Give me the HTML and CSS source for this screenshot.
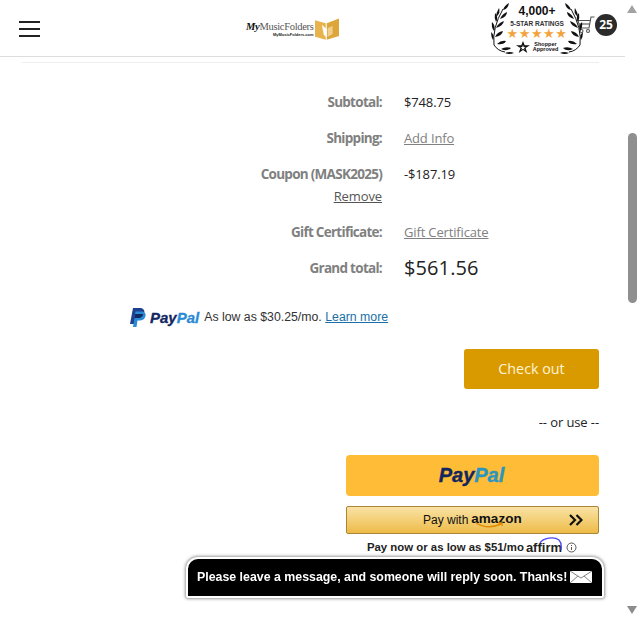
FILE: index.html
```html
<!DOCTYPE html>
<html lang="en">
<head>
  <meta charset="UTF-8" />
  <meta name="viewport" content="width=device-width, initial-scale=1" />
  <title>Cart | MyMusicFolders</title>
  <link rel="stylesheet" href="styles.css">
</head>
<body>

  <header class="site-header">
    <div class="menu-btn"><span></span><span></span><span></span></div>

    <div class="logo">
      <div class="logo-text">
        <p class="logo-name"><em>My</em>MusicFolders</p>
        <p class="logo-sub">MyMusicFolders.com</p>
      </div>
      <svg class="logo-mark" width="25" height="22" viewBox="0 0 25 22">
        <path d="M0 2l11 3v17L0 19z" fill="#e6b34c"/>
        <path d="M12 22V5l13-5v18z" fill="#dca63a"/>
        <path d="M7 7l5 4v9l-3-3z" fill="#fff"/>
        <path d="M13 10l5-2v8l-5 3z" fill="#f1d08c"/>
      </svg>
    </div>

    <div class="rating">
      <svg class="laurel" width="92" height="52" viewBox="0 0 92 52">
        <g id="branch" fill="#111">
          <path d="M14 50q-7-1-11-7" fill="none" stroke="#111" stroke-width="1"/>
          <path d="M3 43Q1 26 12 7" fill="none" stroke="#111" stroke-width="1"/>
          <path d="M12 8q1-4 6-7-1 6-6 7z"/>
          <path d="M8 14q0-4 3-9 2 5-3 9z" transform="translate(-3 1)"/>
          <path d="M9 17q2-5 7-7 0 5-7 7z"/>
          <path d="M5 20q-2-4-1-9 4 4 1 9z"/>
          <path d="M5 26q2-5 8-7-1 5-8 7z"/>
          <path d="M3 29q-3-4-2-9 4 4 2 9z"/>
          <path d="M4 35q2-5 8-6-1 5-8 6z"/>
          <path d="M2 38q-2-3-2-8 4 3 2 8z"/>
          <path d="M6 42q4-4 9-3-2 4-9 3z"/>
          <path d="M10 47q5-3 10-1-4 4-10 1z"/>
          <path d="M14 51q5-2 9 0-5 2-9 0z"/>
        </g>
        <use href="#branch" transform="matrix(-1 0 0 1 92 0)"/>
      </svg>
      <p class="rating-count">4,000+</p>
      <p class="rating-label">5-STAR RATINGS</p>
      <p class="rating-stars">★★★★★</p>
      <div class="rating-foot">
        <svg width="14" height="12" viewBox="0 0 14 12">
          <path d="M7 0l1.700 4.300H14L9.600 7l1.700 5L7 9l-4.300 3 1.700-5L0 4.300h5.300z" fill="#111"/>
          <path d="M7 4l.7 2h2L8 7l.6 2L7 7.800 5.400 9 6 7 4.300 6h2z" fill="#fff"/>
        </svg>
        <p>Shopper<br>Approved</p>
      </div>
    </div>

    <svg class="cart-icon" width="18" height="18" viewBox="0 0 18 18" fill="none" stroke="#555" stroke-width="1.100">
      <path d="M17.500 1L14 1 12 12H3L1 4.500H14"/>
      <path d="M2 8H13"/>
      <circle cx="4.500" cy="15" r="1.500"/>
      <circle cx="11" cy="15" r="1.500"/>
    </svg>
    <span class="cart-count">25</span>
  </header>

  <main class="cart-page">
    <div class="totals">
      <div class="total-row">
        <div class="total-label">Subtotal:</div>
        <div class="total-value">$748.75</div>
      </div>
      <div class="total-row">
        <div class="total-label">Shipping:</div>
        <div class="total-value"><a href="#" class="muted-link">Add Info</a></div>
      </div>
      <div class="total-row">
        <div class="total-label">
          Coupon (MASK2025)<br>
          <a href="#" class="remove-link">Remove</a>
        </div>
        <div class="total-value">-$187.19</div>
      </div>
      <div class="total-row">
        <div class="total-label">Gift Certificate:</div>
        <div class="total-value"><a href="#" class="muted-link">Gift Certificate</a></div>
      </div>
      <div class="total-row">
        <div class="total-label">Grand total:</div>
        <div class="total-value grand">$561.56</div>
      </div>
    </div>

    <div class="paypal-msg">
      <svg width="16" height="19" viewBox="0 0 16 19">
        <path d="M3 0h6.500C13 0 15 2 14.300 5c-.7 3.500-3.300 5-6.500 5H5.500L4.500 16H0z" fill="#1f3f8f"/>
        <path d="M5.500 3.500h5.500c3.500 0 5 2 4.500 4.500-.6 3-3 4.500-6 4.500H7.500L6.500 19H3z" fill="#2a8ad4"/>
        <path d="M5.200 6h6c.8 0 1.500.1 2 .4-.6 2.400-2.900 3.600-5.400 3.600H5.500l-1 .8z" fill="#12265f"/>
      </svg>
      <span class="pp-word"><b>Pay</b><i>Pal</i></span>
      <span class="pp-text">As low as $30.25/mo. <a href="#">Learn more</a></span>
    </div>

    <div class="checkout">
      <a href="#" class="btn-checkout">Check out</a>
      <p class="or-use">-- or use --</p>
      <a href="#" class="btn-paypal"><b>Pay</b><i>Pal</i></a>
      <a href="#" class="btn-amazon">
        <span class="amz-pay">Pay with</span>
        <span class="amz-word">amazon
          <svg width="32" height="7" viewBox="0 0 32 7" fill="none" stroke="#e08a00" stroke-width="1.400">
            <path d="M2 1q12 7 25 1"/>
            <path d="M24 1h4v3"/>
          </svg>
        </span>
        <svg class="amz-arrows" width="14" height="12" viewBox="0 0 14 12" fill="none" stroke="#111" stroke-width="2.200">
          <path d="M1 1l5 5-5 5M7.500 1l5 5-5 5"/>
        </svg>
      </a>
      <div class="affirm-line">
        <span>Pay now or as low as $51/mo</span>
        <span class="affirm-word">affirm
          <svg width="24" height="14" viewBox="0 0 24 14" fill="none" stroke="#4a4af4" stroke-width="1.300">
            <path d="M1 6C4 1 15-1 20 3q3 3 2 10"/>
          </svg>
        </span>
        <svg class="info-icon" width="11" height="11" viewBox="0 0 11 11" fill="none" stroke="#555">
          <circle cx="5.500" cy="5.500" r="4.500"/>
          <path d="M5.500 5v3M5.500 3v1"/>
        </svg>
      </div>
    </div>
  </main>

  <!-- chat tab -->
  <div class="chat-tab">
    <span>Please leave a message, and someone will reply soon. Thanks!</span>
    <svg width="22" height="12" viewBox="0 0 22 12">
      <rect width="22" height="12" fill="#fff"/>
      <path d="M0 0l11 7 11-7M0 12l8-7M22 12l-8-7" fill="none" stroke="#666" stroke-width=".8"/>
    </svg>
  </div>

  <!-- browser scrollbar -->
  <div class="scrollbar">
    <span class="arrow-up"></span>
    <span class="thumb"></span>
    <span class="arrow-down"></span>
  </div>

</body>
</html>
```

FILE: styles.css
```css
html, body {
  height: 100%;
}
body {
  margin: 0;
  height: 617px;
  overflow: hidden;
  background: #fff;
  font-family: "Open Sans", "Noto Sans", sans-serif;
  font-size: 14px;
  color: #222;
}
p {
  margin: 0;
}

/* Header */
.site-header {
  box-sizing: border-box;
  width: 625px;
  height: 57px;
  padding-left: 19px;
  display: flex;
  align-items: center;
  border-bottom: 1px solid #ddd;
}
.menu-btn {
  width: 21px;
  margin-top: 2px;
  display: flex;
  flex-direction: column;
  gap: 5px;
}
.menu-btn span {
  height: 2px;
  background: #222;
}
.logo {
  margin-left: 206px;
  margin-top: 2px;
  width: 93px;
  display: flex;
  align-items: center;
  gap: 1px;
}
.logo-text {
  width: 68px;
  text-align: right;
}
.logo-name {
  font-family: "Liberation Serif", serif;
  font-size: 10.500px;
  line-height: 11px;
  letter-spacing: -0.300px;
  white-space: nowrap;
  color: #555;
}
.logo-name em {
  font-weight: bold;
  color: #111;
}
.logo-sub {
  font-family: "Liberation Sans", sans-serif;
  font-size: 4px;
  font-weight: bold;
  line-height: 5px;
  white-space: nowrap;
}
.rating {
  position: relative;
  margin-left: 152px;
  width: 92px;
  height: 52px;
  display: flex;
  flex-direction: column;
  align-items: center;
  font-family: "Liberation Sans", sans-serif;
}
.laurel {
  position: absolute;
  left: 0;
  top: 0;
}
.rating-count {
  font-size: 12px;
  font-weight: bold;
  line-height: 14px;
  margin-top: 2px;
  color: #111;
}
.rating-label {
  font-size: 6.500px;
  font-weight: bold;
  line-height: 9px;
  margin-top: 1px;
  color: #333;
}
.rating-stars {
  font-family: "DejaVu Sans", sans-serif;
  font-size: 13px;
  line-height: 12px;
  color: #f2a33a;
  letter-spacing: 0.500px;
}
.rating-foot {
  display: flex;
  align-items: center;
  gap: 3px;
  margin-top: 1px;
}
.rating-foot p {
  font-size: 5.500px;
  font-weight: bold;
  line-height: 5.500px;
  text-align: center;
  color: #111;
}
.cart-icon {
  margin-left: -6px;
  margin-top: -7px;
}
.cart-count {
  width: 22px;
  height: 22px;
  margin-top: -6px;
  border-radius: 50%;
  background: #2b2b2b;
  color: #fff;
  font-size: 12px;
  font-weight: bold;
  line-height: 22px;
  text-align: center;
}

/* Totals */
.cart-page {
  width: 577px;
  margin-left: 22px;
  padding-top: 5px;
}
.totals {
  border-top: 1px solid #eee;
  padding-top: 28px;
}
.total-row {
  display: grid;
  grid-template-columns: 360px 1fr;
  column-gap: 22px;
  line-height: 22px;
  margin-bottom: 14px;
}
.total-row:last-child {
  margin-bottom: 0;
}
.total-label {
  text-align: right;
  font-size: 13.500px;
  font-weight: 700;
  color: #808080;
  letter-spacing: -0.720px;
}
.total-value {
  font-size: 13px;
  letter-spacing: -0.150px;
  color: #222;
}
.total-value.grand {
  font-size: 20px;
  letter-spacing: 0.100px;
}
.muted-link {
  color: #808080;
}
.remove-link {
  font-size: 13px;
  font-weight: 400;
  color: #555;
  letter-spacing: -0.100px;
}

/* PayPal message */
.paypal-msg {
  margin: 28px 0 0 108px;
  height: 20px;
  display: flex;
  align-items: center;
}
.pp-word {
  margin-left: 4px;
  font-family: "Liberation Sans", sans-serif;
  font-size: 15px;
  font-style: italic;
  font-weight: bold;
  -webkit-text-stroke: 0.300px currentColor;
}
.pp-word b {
  color: #12265f;
}
.pp-word i {
  color: #2a8ad4;
}
.pp-text {
  margin-left: 5px;
  font-family: "Liberation Sans", sans-serif;
  font-size: 12.300px;
  color: #333;
}
.pp-text a {
  color: #1a6fa8;
}

/* Checkout buttons */
.checkout {
  margin-top: 22px;
  display: flex;
  flex-direction: column;
  align-items: flex-end;
}
.btn-checkout {
  width: 135px;
  height: 40px;
  border-radius: 3px;
  background: #d99a00;
  color: #fff3d6;
  font-size: 14.300px;
  text-align: center;
  line-height: 40px;
  text-decoration: none;
}
.or-use {
  margin-top: 22px;
  line-height: 22px;
  font-size: 13px;
  letter-spacing: -0.100px;
  color: #222;
}
.btn-paypal {
  margin-top: 22px;
  width: 253px;
  height: 41px;
  border-radius: 4px;
  background: #ffbc36;
  padding-right: 2px;
  box-sizing: border-box;
  text-align: center;
  font-family: "Liberation Sans", sans-serif;
  font-size: 20px;
  font-style: italic;
  font-weight: bold;
  line-height: 40px;
  text-decoration: none;
  -webkit-text-stroke: 0.400px currentColor;
}
.btn-paypal b {
  color: #12265f;
}
.btn-paypal i {
  color: #2a95c0;
}
.btn-amazon {
  box-sizing: border-box;
  margin-top: 10px;
  width: 253px;
  height: 28px;
  padding-left: 76px;
  display: flex;
  align-items: center;
  border: 1px solid #a88734;
  border-radius: 2px;
  background: linear-gradient(#f9e3a6, #eebb48);
  color: #111;
  text-decoration: none;
  font-family: "Liberation Sans", sans-serif;
}
.amz-pay {
  font-size: 12px;
}
.amz-word {
  position: relative;
  margin-left: 3px;
  font-size: 13.500px;
  font-weight: bold;
  line-height: 14px;
  margin-top: -3px;
}
.amz-word svg {
  position: absolute;
  left: 3px;
  top: 10px;
}
.amz-arrows {
  margin-left: 47px;
}
.affirm-line {
  box-sizing: border-box;
  height: 18px;
  margin-top: 4px;
  padding-right: 22px;
  display: flex;
  align-items: center;
  font-family: "Liberation Sans", sans-serif;
  font-size: 11.400px;
  font-weight: bold;
  color: #222;
}
.affirm-word {
  position: relative;
  margin-left: 2px;
  font-size: 13px;
}
.affirm-word svg {
  position: absolute;
  right: -1px;
  top: -3px;
}
.info-icon {
  margin-left: 4px;
}

/* Chat tab */
.chat-tab {
  position: fixed;
  left: 186px;
  top: 557px;
  box-sizing: border-box;
  width: 418px;
  height: 41px;
  padding: 0 9px 2px;
  display: flex;
  align-items: center;
  gap: 3px;
  background: #000;
  border: 2px solid #fff;
  border-radius: 12px 12px 2px 2px;
  box-shadow: 0 0 3px 1px #999;
  color: #fff;
  font-family: "Liberation Sans", sans-serif;
  font-size: 12.370px;
  font-weight: bold;
  white-space: nowrap;
}

/* Scrollbar */
.scrollbar {
  position: fixed;
  right: 0;
  top: 0;
  width: 16px;
  height: 617px;
}
.arrow-up, .arrow-down {
  position: absolute;
  left: 3px;
  width: 0;
  height: 0;
  border-left: 5px solid transparent;
  border-right: 5px solid transparent;
}
.arrow-up {
  top: 5px;
  border-bottom: 8px solid #a3a3a3;
}
.arrow-down {
  top: 606px;
  border-top: 8px solid #8c8c8c;
}
.thumb {
  position: absolute;
  left: 4px;
  top: 133px;
  width: 9px;
  height: 170px;
  border-radius: 5px;
  background: #8f8f8f;
}
```
